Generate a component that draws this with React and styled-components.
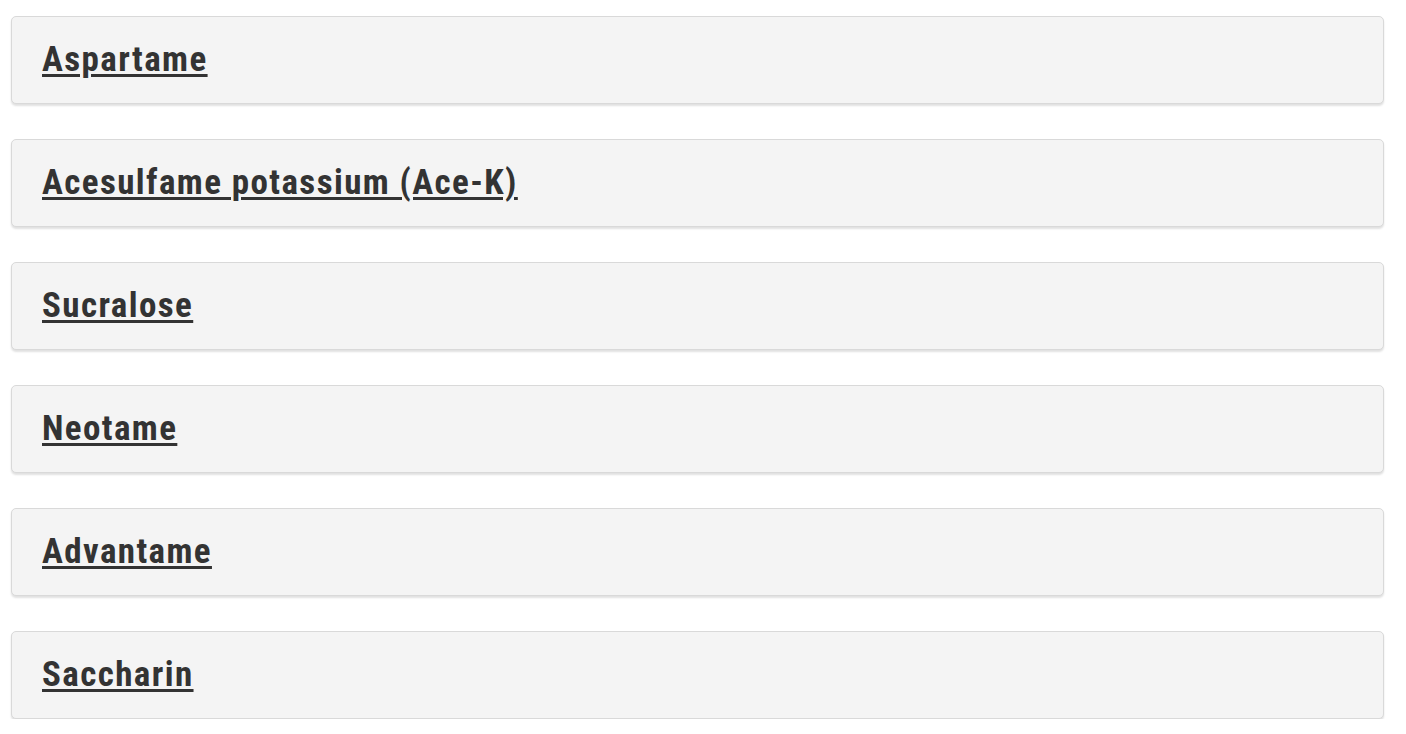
import React from "react";
import styled, { createGlobalStyle } from "styled-components";

const Global = createGlobalStyle`
  html, body { margin: 0; padding: 0; background: #fff; }
  body { font-family: "Roboto Condensed", Roboto, "Liberation Sans", sans-serif; }
`;

const List = styled.div`
  display: flex;
  flex-direction: column;
  gap: 35px;
  padding: 16px 22px 0 11px;
`;

const Card = styled.div`
  box-sizing: border-box;
  height: 88px;
  display: flex;
  align-items: center;
  padding: 0 30px 2px;
  background: #f4f4f4;
  border: 1px solid #d9d9d9;
  border-radius: 5px;
  box-shadow: 0 2px 2px rgba(0, 0, 0, 0.12);
`;

const Title = styled.a`
  font-family: "Roboto Condensed", Roboto, "Liberation Sans", sans-serif;
  font-weight: 700;
  font-size: 35px;
  letter-spacing: 1.4px;
  line-height: 1;
  color: #333;
  text-decoration: underline;
  text-decoration-thickness: 3px;
  text-underline-offset: 3px;
  cursor: pointer;
`;

const items = [
  "Aspartame",
  "Acesulfame potassium (Ace-K)",
  "Sucralose",
  "Neotame",
  "Advantame",
  "Saccharin",
];

export default function App() {
  return (
    <>
      <Global />
      <List>
        {items.map((t) => (
          <Card key={t}>
            <Title>{t}</Title>
          </Card>
        ))}
      </List>
    </>
  );
}
